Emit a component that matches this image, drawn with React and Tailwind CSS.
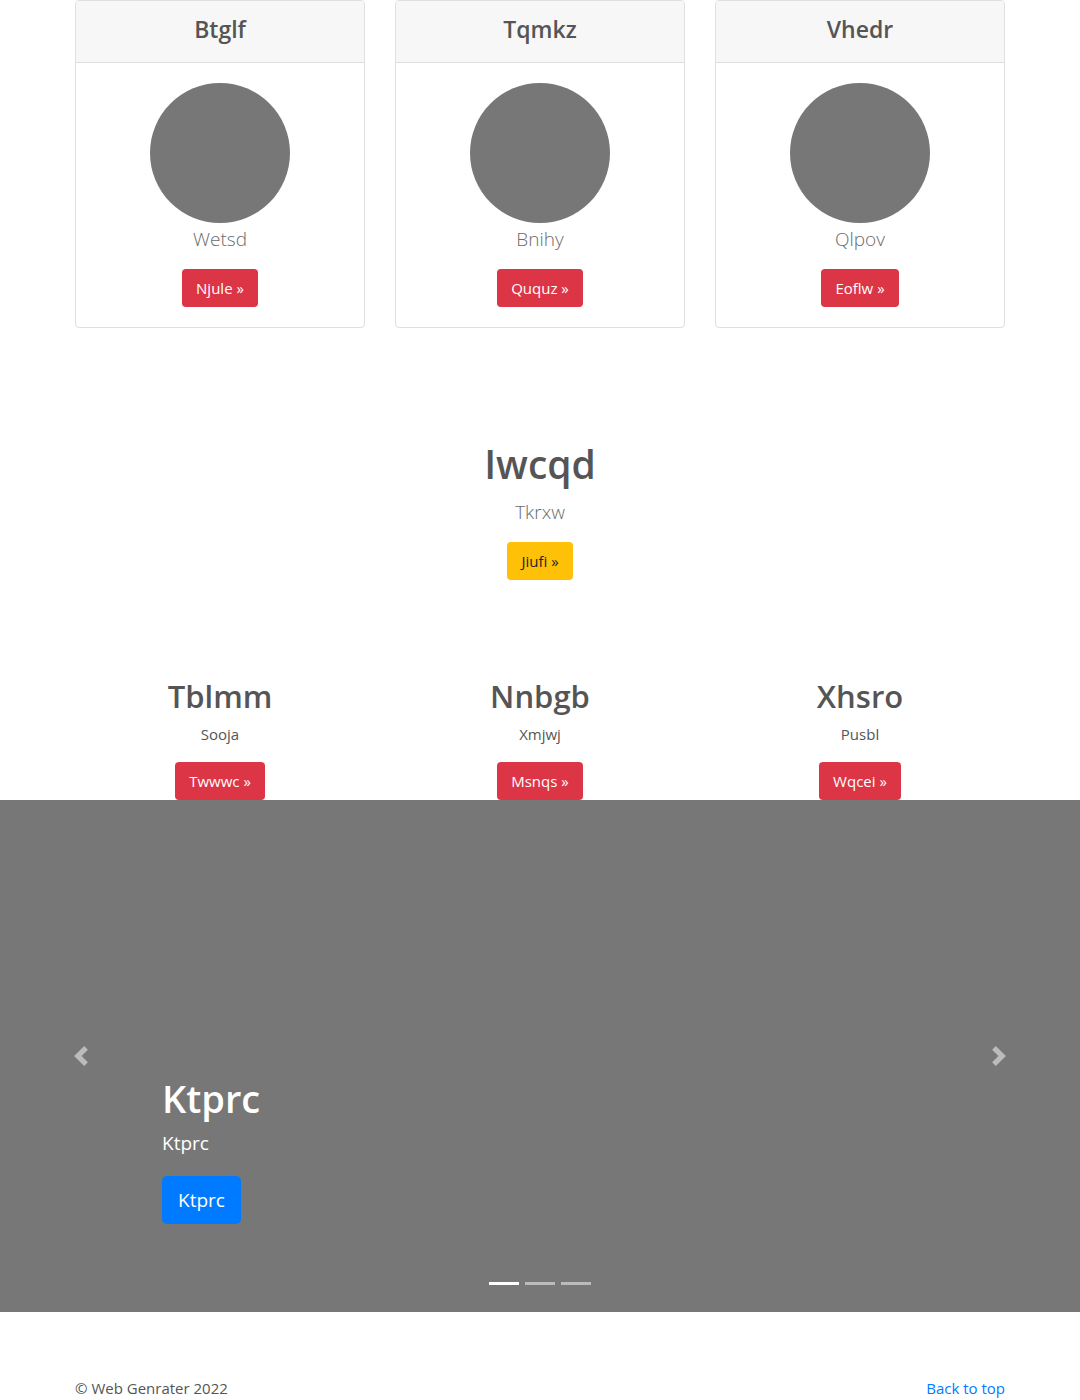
import { ChevronLeft, ChevronRight } from 'lucide-react';

const cards = [
  { title: 'Btglf', text: 'Wetsd', btn: 'Njule' },
  { title: 'Tqmkz', text: 'Bnihy', btn: 'Ququz' },
  { title: 'Vhedr', text: 'Qlpov', btn: 'Eoflw' },
];

const features = [
  { title: 'Tblmm', text: 'Sooja', btn: 'Twwwc' },
  { title: 'Nnbgb', text: 'Xmjwj', btn: 'Msnqs' },
  { title: 'Xhsro', text: 'Pusbl', btn: 'Wqcei' },
];

const Chevron = ({ dir }) => (
  <svg width="20" height="20" viewBox="0 0 8 8" className="opacity-50">
    {dir === 'left' ? (
      <path fill="#fff" d="M5.25 0l-4 4 4 4 1.5-1.5L4.25 4l2.5-2.5L5.25 0z" />
    ) : (
      <path fill="#fff" d="M2.75 0l-1.5 1.5L3.75 4l-2.5 2.5L2.75 8l4-4-4-4z" />
    )}
  </svg>
);

const App = () => {
  return (
    <div className="bg-white text-[#555] font-['Open_Sans',sans-serif] text-base leading-6">
      {/* Cards */}
      <div className="w-[930px] mx-auto grid grid-cols-3 gap-[30px]">
        {cards.map((c) => (
          <div key={c.title} className="border border-[#dfdfdf] rounded-[4px] bg-white overflow-hidden">
            <div className="h-[62px] pb-[6px] bg-[#f7f7f7] border-b border-[#dfdfdf] flex items-center justify-center">
              <h4 className="text-[23px] font-semibold">{c.title}</h4>
            </div>
            <div className="p-5 flex flex-col items-center">
              <div className="w-[140px] h-[140px] rounded-full bg-[#777]" />
              <p className="text-[19px] font-light leading-[32px] text-[#6b6b6b]">{c.text}</p>
              <button className="mt-[14px] h-[38px] px-[14px] rounded-[4px] bg-[#dc3545] text-white text-[15px]">
                {c.btn} »
              </button>
            </div>
          </div>
        ))}
      </div>

      {/* Hero */}
      <div className="pt-[112px] pb-[80px] flex flex-col items-center">
        <h1 className="text-[39px] leading-[48px] font-semibold">Iwcqd</h1>
        <p className="text-[19px] font-light leading-[30px] mt-[9px] text-[#6b6b6b]">Tkrxw</p>
        <button className="mt-[15px] h-[38px] px-[14px] rounded-[4px] bg-[#ffc107] text-[#212529] text-[15px]">
          Jiufi »
        </button>
      </div>

      {/* Features */}
      <div className="w-[930px] mx-auto grid grid-cols-3 gap-[30px] pt-[17px]">
        {features.map((f) => (
          <div key={f.title} className="flex flex-col items-center">
            <h2 className="text-[31px] leading-[38px] font-semibold">{f.title}</h2>
            <p className="text-[15px] leading-6 mt-[7px]">{f.text}</p>
            <button className="mt-[16px] h-[38px] px-[14px] rounded-[4px] bg-[#dc3545] text-white text-[15px]">
              {f.btn} »
            </button>
          </div>
        ))}
      </div>

      {/* Carousel */}
      <div className="relative h-[512px] bg-[#777]">
        <button className="absolute left-0 top-0 bottom-0 w-[15%] flex items-center justify-center">
          <Chevron dir="left" />
        </button>
        <button className="absolute right-0 top-0 bottom-0 w-[15%] flex items-center justify-center">
          <Chevron dir="right" />
        </button>
        <div className="absolute left-[15%] right-[15%] bottom-[68px] pb-5 text-white">
          <h1 className="text-[38px] leading-[48px] font-semibold">Ktprc</h1>
          <p className="text-[19px] leading-[30px] mt-[6px]">Ktprc</p>
          <button className="mt-[18px] h-[48px] px-4 rounded-[5px] bg-[#007bff] text-white text-[19px]">
            Ktprc
          </button>
        </div>
        <div className="absolute bottom-[27px] left-0 right-0 flex justify-center gap-[6px]">
          <span className="w-[30px] h-[3px] bg-white" />
          <span className="w-[30px] h-[3px] bg-white/50" />
          <span className="w-[30px] h-[3px] bg-white/50" />
        </div>
      </div>

      {/* Footer */}
      <footer className="w-[930px] mx-auto pt-[64px] pb-[40px] flex justify-between text-[15px]">
        <p>© Web Genrater 2022</p>
        <a href="#" className="text-[#007bff]">Back to top</a>
      </footer>
    </div>
  );
};

export default App;
